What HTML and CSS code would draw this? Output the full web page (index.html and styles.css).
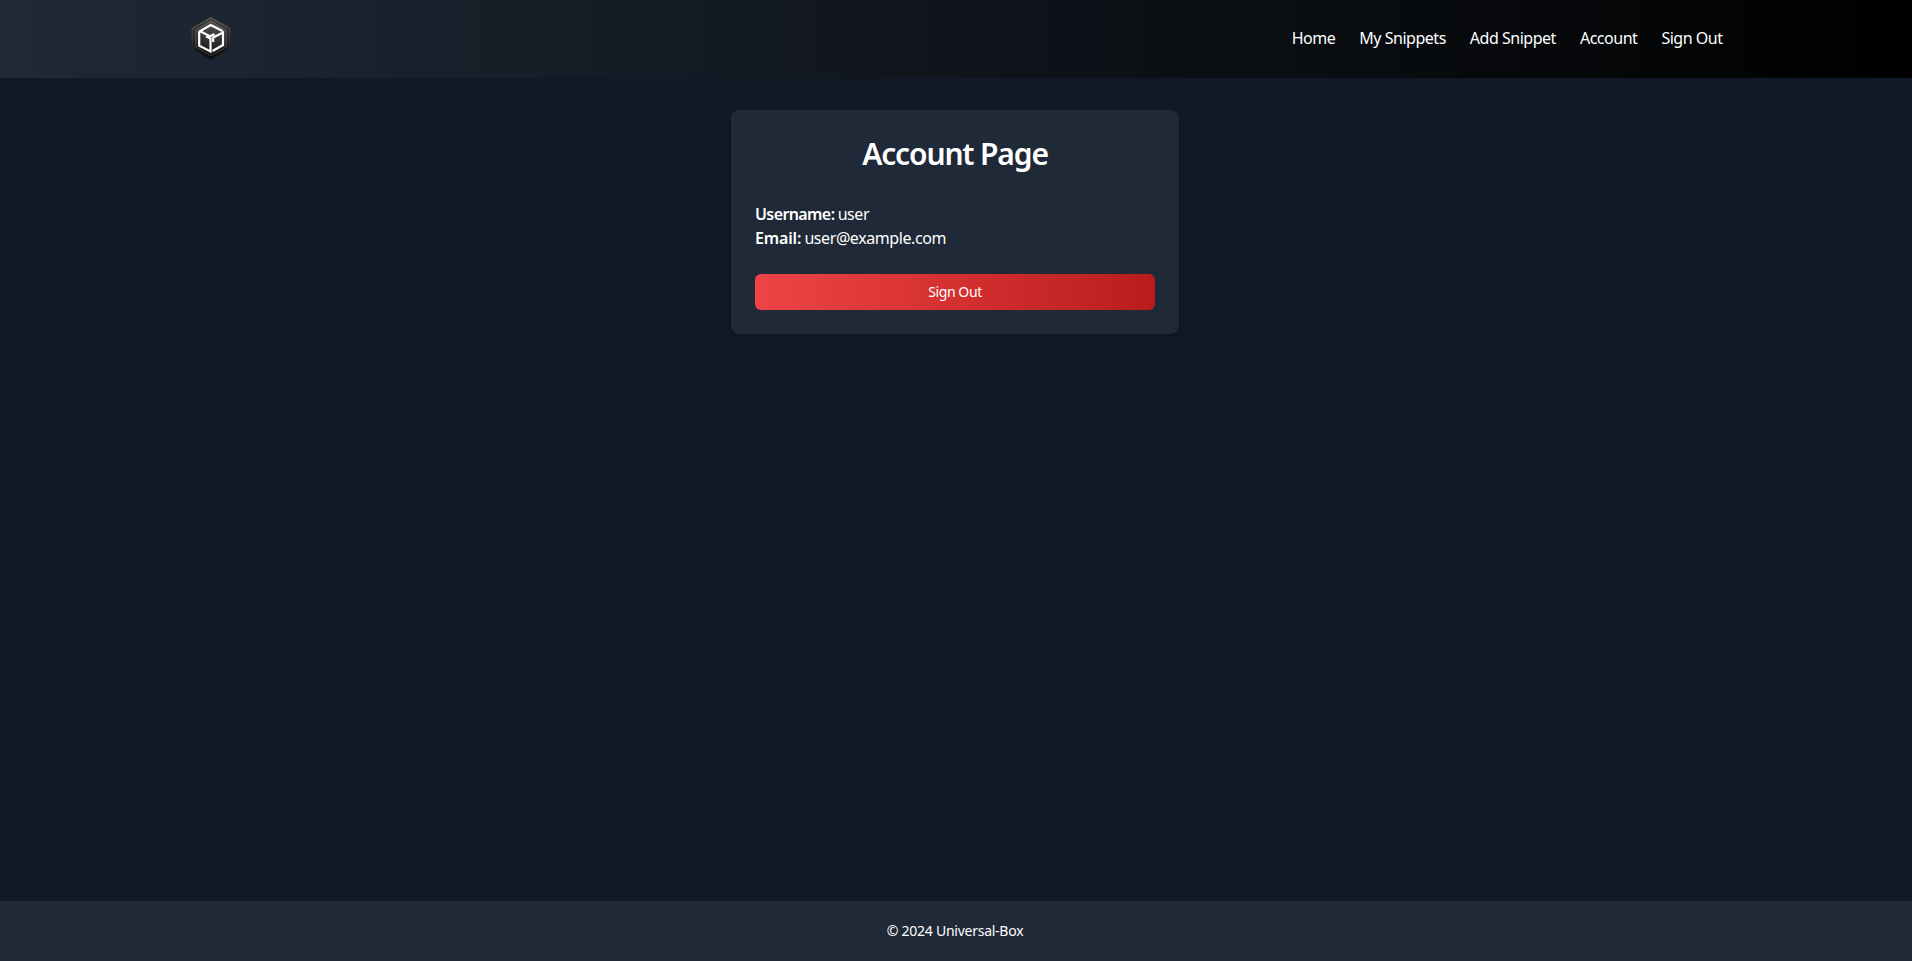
FILE: index.html
```html
<!DOCTYPE html>
<html lang="en">
<head>
<meta charset="utf-8">
<title>Account</title>
<link rel="stylesheet" href="styles.css">
</head>
<body>
<header class="header">
  <div class="bar">
    <a class="logo" aria-label="Universal-Box">
      <svg width="42" height="45" viewBox="0 0 42 45">
        <defs><linearGradient id="hex" x1="0" y1="0" x2="0" y2="1"><stop offset="0" stop-color="#5a5856"/><stop offset=".5" stop-color="#343434"/><stop offset="1" stop-color="#0b0c0d"/></linearGradient></defs>
        <path d="M21 1 40.500 12V33L21 44 1.500 33V12Z" fill="url(#hex)"/>
        <path d="M21 3.500 38 13.500V31.500L21 41.500 4 31.500V13.500Z" fill="none" stroke="#000" stroke-opacity=".5"/>
        <path d="M21 5 36.500 14V31L21 40 5.500 31V14Z" fill="none" stroke="#888" stroke-opacity=".25"/>
        <path d="M32.500 15 20.700 9 10 15.200 20 20.200 24.500 18M9.200 16V29.700L20.500 35.500V22.500L16 20.500M22.500 35 33 29V16.500L23.200 21.500V26" fill="none" stroke="#fff" stroke-width="2.200"/>
      </svg>
    </a>
    <nav class="nav"><a>Home</a><a>My Snippets</a><a>Add Snippet</a><a>Account</a><a>Sign Out</a></nav>
  </div>
</header>
<main class="main">
  <section class="card">
    <h1 class="title">Account Page</h1>
    <p class="row"><strong class="label label-user">Username:</strong> <span class="value">user</span></p>
    <p class="row"><strong class="label">Email:</strong> <span class="value">user@example.com</span></p>
    <button class="button">Sign Out</button>
  </section>
</main>
<footer class="footer"><p class="copy">© 2024 Universal-Box</p></footer>
</body>
</html>
```
FILE: styles.css
```css
* { box-sizing: border-box; margin: 0; }
body { display: flex; flex-direction: column; min-height: 961px; padding-right: 2px; background: #111827; color: #fff; font: 16px/24px "Noto Sans", sans-serif; }
.header { height: 78px; margin-right: -2px; background: linear-gradient(to right, #1f2937, #000); }
.bar { display: flex; justify-content: space-between; width: 1533px; margin: 0 auto; padding-top: 16px; }
.logo { display: block; height: 45px; }
.nav { display: flex; gap: 24px; padding-top: 10px; letter-spacing: -0.48px; }
.main { flex: 1; padding-top: 32px; }
.card { width: 448px; height: 224px; margin: 0 auto; padding: 24px; border-radius: 8px; background: #1f2937; box-shadow: 0 4px 6px -1px #0000001a, 0 2px 4px -2px #0000001a; }
.title { margin-bottom: 30px; padding-top: 2px; text-align: center; font-size: 30px; line-height: 36px; font-weight: 600; letter-spacing: -1.15px; }
.row { word-spacing: -1px; }
.label { font-weight: 600; letter-spacing: -0.15px; }
.label-user { letter-spacing: -0.6px; }
.value { letter-spacing: -0.42px; }
.button { display: block; width: 100%; height: 36px; margin-top: 24px; border: 0; border-radius: 6px; background: linear-gradient(to right, #ef4444, #b91c1c); color: #fff; font: 14px/20px "Noto Sans", sans-serif; letter-spacing: -0.4px; }
.footer { height: 60px; margin-right: -2px; padding: 20px 2px 0 0; background: #1f2937; text-align: center; font-size: 14px; line-height: 20px; letter-spacing: -0.25px; }
```
